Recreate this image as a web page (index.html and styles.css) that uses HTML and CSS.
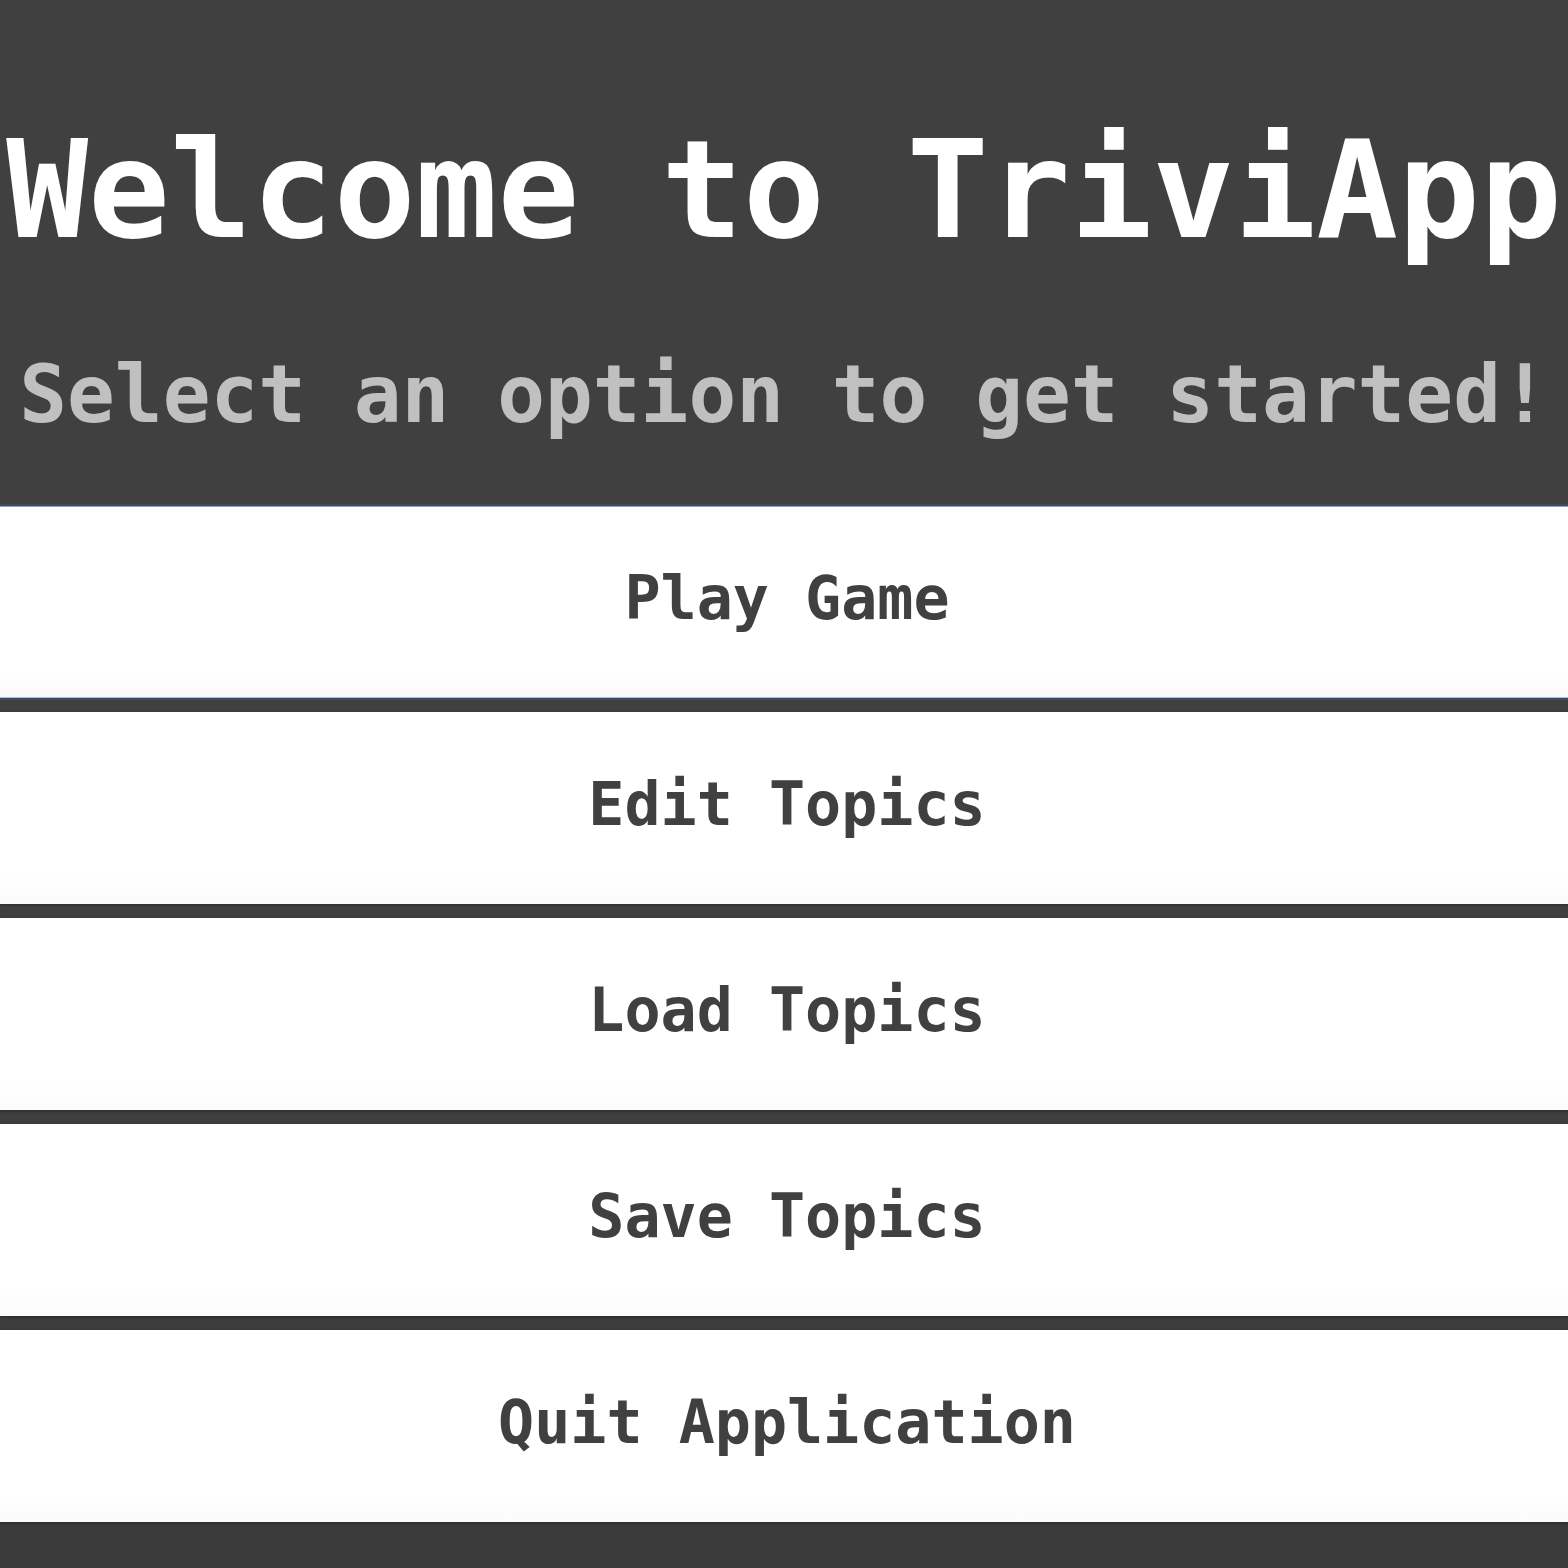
FILE: index.html
```html
<!DOCTYPE html>
<html lang="en">
<head>
<meta charset="utf-8">
<title>TriviApp</title>
<link rel="stylesheet" href="styles.css">
</head>
<body>
<div class="app">
  <header class="header">
    <h1 class="title">Welcome to TriviApp</h1>
    <h2 class="subtitle">Select an option to get started!</h2>
  </header>
  <nav class="menu">
    <button class="menu-btn is-focused">Play Game</button>
    <button class="menu-btn">Edit Topics</button>
    <button class="menu-btn">Load Topics</button>
    <button class="menu-btn">Save Topics</button>
    <button class="menu-btn">Quit Application</button>
  </nav>
</div>
</body>
</html>
```

FILE: styles.css
```css
html, body {
  margin: 0;
  padding: 0;
  background: #404040;
}

.app {
  min-height: 1568px;
  background: linear-gradient(#404040 0%, #404040 60%, #3b3b3b 100%);
  font-family: "DejaVu Sans Mono", monospace;
  font-weight: bold;
  overflow: hidden;
}

.header {
  padding: 111px 0 64px;
  text-align: center;
}

.title {
  margin: 0;
  font-size: 136px;
  line-height: 1.164;
  color: #ffffff;
  font-weight: bold;
  white-space: nowrap;
}

.subtitle {
  margin: 80px 0 0;
  font-size: 79.4px;
  line-height: 1.164;
  color: #c0c0c0;
  font-weight: bold;
  white-space: nowrap;
}

.menu {
  display: flex;
  flex-direction: column;
  gap: 14px;
}

.menu-btn {
  display: block;
  width: 100%;
  height: 192px;
  margin: 0;
  padding: 0 0 8px 6px;
  border: none;
  background: linear-gradient(#ffffff 0%, #ffffff 85%, #fbfbfb 100%);
  box-shadow: 0 1px 3px rgba(0, 0, 0, 0.35);
  font-family: "DejaVu Sans Mono", monospace;
  font-weight: bold;
  font-size: 60px;
  color: #404040;
  text-align: center;
  cursor: pointer;
}

.menu-btn.is-focused {
  box-shadow: inset 0 1px 0 #8ea3ba, inset 0 -1px 0 #b0c0d0, 0 0 0 2px #3d4d60;
}
```
